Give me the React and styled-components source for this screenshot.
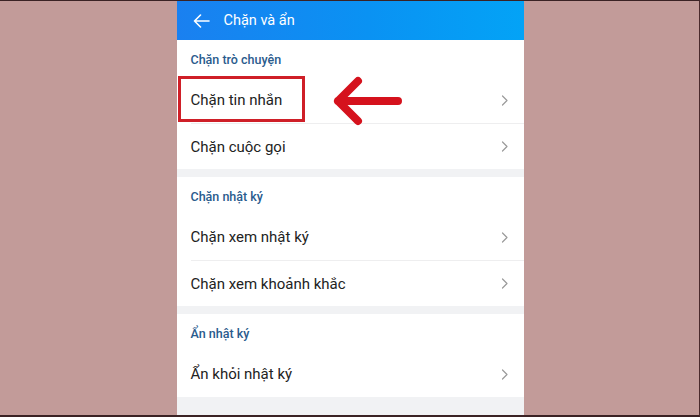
import React from 'react';
import styled, { createGlobalStyle } from 'styled-components';

const Global = createGlobalStyle`
  html, body { margin: 0; padding: 0; }
  body { font-family: Roboto, "Noto Sans", Arial, sans-serif; }
`;

const Stage = styled.div`
  position: relative;
  width: 700px;
  height: 417px;
  box-sizing: border-box;
  background: #c29b99;
  border-top: 1px solid #3a2224;
  border-bottom: 2px solid #3a2224;
  border-right: 1px solid #4a2a2c;
  display: flex;
  justify-content: center;
  overflow: hidden;
`;

const Screen = styled.div`
  width: 347px;
  height: 100%;
  margin-left: 1px;
  background: #f1f2f4;
  display: flex;
  flex-direction: column;
`;

const Header = styled.div`
  height: 39px;
  flex: none;
  display: flex;
  align-items: center;
  gap: 14px;
  padding-left: 16px;
  background: linear-gradient(90deg, #1a80f0 0%, #0a92f3 55%, #03a3f6 100%);
  color: #fff;
  font-size: 14.5px;
`;

const Section = styled.div`
  background: #fff;
  margin-bottom: ${p => (p.last ? 0 : 8)}px;
`;

const SectionTitle = styled.div`
  height: 37px;
  display: flex;
  align-items: center;
  padding: 2px 0 0 14px;
  box-sizing: border-box;
  font-size: 12.5px;
  font-weight: 500;
  color: #2a5b8d;
`;

const Row = styled.div`
  height: 46px;
  display: flex;
  align-items: center;
  justify-content: space-between;
  margin-left: 14px;
  padding-right: 16px;
  font-size: 15px;
  color: #222;
  border-top: ${p => (p.divider ? '1px solid #eeeeef' : 'none')};
  box-sizing: border-box;
`;

const Highlight = styled.div`
  position: absolute;
  left: 178px;
  top: 75px;
  width: 127px;
  height: 46px;
  box-sizing: border-box;
  border: 3px solid #cf1f28;
`;

const Pointer = styled.svg`
  position: absolute;
  left: 328px;
  top: 72px;
`;

const Back = () => (
  <svg width="17" height="14" viewBox="0 0 17 14" fill="none" stroke="#fff" strokeWidth="1.6" strokeLinecap="round" strokeLinejoin="round">
    <path d="M16 7H1.5M7.5 1L1.5 7l6 6" />
  </svg>
);

const Chevron = () => (
  <svg width="7" height="11" viewBox="0 0 7 11" fill="none" stroke="#9a9a9a" strokeWidth="1.2" strokeLinecap="round" strokeLinejoin="round">
    <path d="M1.5 1l4.5 4.5L1.5 10" />
  </svg>
);

const sections = [
  { title: 'Chặn trò chuyện', items: ['Chặn tin nhắn', 'Chặn cuộc gọi'] },
  { title: 'Chặn nhật ký', items: ['Chặn xem nhật ký', 'Chặn xem khoảnh khắc'] },
  { title: 'Ẩn nhật ký', items: ['Ẩn khỏi nhật ký'] },
];

export default function App() {
  return (
    <>
      <Global />
      <Stage>
        <Screen>
          <Header>
            <Back />
            <span>Chặn và ẩn</span>
          </Header>
          {sections.map((s, i) => (
            <Section key={s.title} last={i === sections.length - 1}>
              <SectionTitle>{s.title}</SectionTitle>
              {s.items.map((item, j) => (
                <Row key={item} divider={j > 0}>
                  <span>{item}</span>
                  <Chevron />
                </Row>
              ))}
            </Section>
          ))}
        </Screen>
        <Highlight />
        <Pointer width="80" height="56" viewBox="0 0 80 56" fill="none" stroke="#d5121d" strokeWidth="8" strokeLinecap="round" strokeLinejoin="round">
          <path d="M70 28H10M30 8L10 28l20 20" />
        </Pointer>
      </Stage>
    </>
  );
}
